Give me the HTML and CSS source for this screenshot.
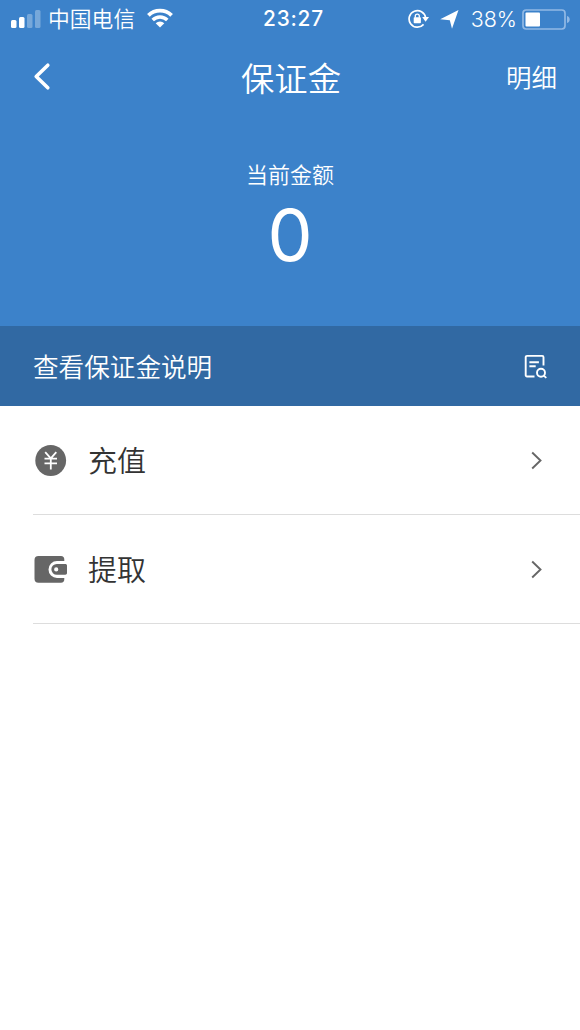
FILE: index.html
```html
<!DOCTYPE html>
<html lang="zh-CN">
<head>
<meta charset="utf-8">
<title>保证金</title>
<link rel="stylesheet" href="styles.css">
</head>
<body>
<header class="hero">
  <div class="status">
    <div class="status-left">
      <svg class="signal" width="31" height="18" viewBox="0 0 31 18" fill="#fff"><rect x="0" y="10" width="5.500" height="8" rx="1.5"/><rect x="8" y="7" width="5.500" height="11" rx="1.5"/><g opacity=".3"><rect x="16" y="4" width="5.500" height="14" rx="1.5"/><rect x="24" y="0" width="5.500" height="18" rx="1.5"/></g></svg>
      <span class="carrier">中国电信</span>
      <svg class="wifi" width="26" height="20" viewBox="0 0 26 20" fill="none" stroke="#fff"><path d="M1.4 7.3a16.5 16.5 0 0 1 23.2 0" stroke-width="3.8"/><path d="M5.7 12a10.3 10.3 0 0 1 14.6 0" stroke-width="3.5"/><path d="M8.7 15.2a6.2 6.2 0 0 1 8.6 0L13 19.5z" fill="#fff" stroke="none"/></svg>
    </div>
    <span class="time">23:27</span>
    <div class="status-right">
      <svg width="21" height="20" viewBox="0 0 21 20" fill="none" stroke="#fff" stroke-width="1.7"><path d="M15.6 15.4A8.3 8.3 0 1 1 17.6 8.700"/><path d="M14.2 8h6.800l-3.400 4.800z" fill="#fff" stroke="none"/><rect x="5.700" y="8.3" width="7.2" height="6" rx=".8" fill="#fff" stroke="none"/><path d="M7.3 8.8V7.1a2 2 0 0 1 4 0v1.7" stroke-width="1.3"/></svg>
      <svg class="location" width="19" height="19" viewBox="0 0 19 19" fill="#fff"><path d="M18.5 0 12 18.800 9.800 10.200.2 9.300z"/></svg>
      <span class="percent">38%</span>
      <svg class="battery" width="48" height="21" viewBox="0 0 48 21"><rect x="1" y="1" width="42" height="19" rx="3.2" fill="none" stroke="#91b9e5" stroke-width="1.7"/><rect x="3.5" y="3.5" width="14.5" height="14" rx="1" fill="#fff"/><path d="M45 7c3.6.8 3.6 6.2 0 7z" fill="#91b9e5"/></svg>
    </div>
  </div>
  <nav class="nav">
    <svg class="back" width="18" height="30" viewBox="0 0 18 30" fill="none" stroke="#fff" stroke-width="3.600" stroke-linecap="round" stroke-linejoin="round"><path d="M14.800 3.200 3.200 14.500l11.600 11.300"/></svg>
    <h1 class="title">保证金</h1>
    <a class="detail">明细</a>
  </nav>
  <div class="balance">
    <span class="label">当前金额</span>
    <strong class="amount">0</strong>
  </div>
</header>
<a class="notice">
  <span class="notice-text">查看保证金说明</span>
  <svg width="24" height="25" viewBox="0 0 24 25" fill="none" stroke="#fff" stroke-width="1.900"><path d="M10.500 22.500H3a1.300 1.300 0 0 1-1.300-1.300V3.200A1.300 1.300 0 0 1 3 1.900h15.200a1.300 1.300 0 0 1 1.300 1.300V11.500"/><path d="M5.400 8.300h9.500M5.400 12.300h6.300"/><circle cx="17" cy="18.700" r="4"/><path d="m19.700 21.600 2.600 2.300"/></svg>
</a>
<main class="list">
  <a class="row">
    <svg class="icon" width="34" height="34" viewBox="0 0 34 34"><circle cx="17.700" cy="17.500" r="15.400" fill="#666"/><path d="m12.200 9.200 5.600 6.200 5.500-6.200M11.500 15.600h12.500M11.500 20.400h12.500M17.800 15.400v11.200" fill="none" stroke="#fff" stroke-width="1.800"/></svg>
    <span class="row-text">充值</span>
    <svg class="chevron" width="14" height="20" viewBox="0 0 14 20" fill="none" stroke="#666" stroke-width="1.900"><path d="m2.200 2.500 8.300 8-8.300 8"/></svg>
  </a>
  <a class="row">
    <svg class="icon" width="34" height="34" viewBox="0 0 34 34" fill="#666"><path d="M5.500 4h22.500a3.500 3.500 0 0 1 3.300 3.500v1.500h-7.300a8.500 8.500 0 0 0 0 17h7.300v1.300a3.500 3.500 0 0 1-3.300 3.500H5.500a4 4 0 0 1-4-4V8a4 4 0 0 1 4-4z"/><path fill-rule="evenodd" d="M23.800 11.900h8.500c1 0 1.700.7 1.700 1.700v7.500c0 1-.7 1.700-1.700 1.700h-8.500a5.450 5.450 0 0 1 0-10.900zM23.200 15.300a2.100 2.100 0 1 0 0 4.200 2.100 2.100 0 0 0 0-4.200z"/></svg>
    <span class="row-text">提取</span>
    <svg class="chevron" width="14" height="20" viewBox="0 0 14 20" fill="none" stroke="#666" stroke-width="1.900"><path d="m2.200 2.500 8.300 8-8.300 8"/></svg>
  </a>
</main>
</body>
</html>
```
FILE: styles.css
```css
* { box-sizing: border-box; }
body {
  margin: 0;
  min-height: 1030px;
  background: #fff;
  color: #333;
  font-family: Inter, "Noto Sans CJK SC DemiLight", "Noto Sans CJK SC", sans-serif;
  font-weight: 350;
}
svg { display: block; flex: none; }
.hero {
  height: 326px;
  background: #3c82ca;
  color: #fff;
}
.status {
  display: grid;
  grid-template-columns: 1fr auto 1fr;
  align-items: center;
  height: 38px;
  padding: 0 10px 0 11px;
}
.status-left, .status-right { display: flex; align-items: center; }
.status-right { justify-content: flex-end; }
.carrier { margin-left: 6px; font-size: 21.800px; line-height: 38px; }
.wifi { margin: 0 0 2px 12px; }
.time {
  margin: 0 0 1px 6px;
  font-size: 20.800px;
  font-weight: 500;
  letter-spacing: .8px;
}
.location { margin-left: 11px; }
.percent { margin: 0 0 1px 12px; font-size: 21.500px; }
.battery { margin-left: 5px; }
.nav {
  display: grid;
  grid-template-columns: 1fr auto 1fr;
  align-items: center;
  height: 78px;
  padding: 0 23px 0 33px;
}
.title { margin: 3px 8px 0 0; font-size: 33.300px; font-weight: 350; line-height: 48px; }
.detail { justify-self: end; margin-bottom: 4px; font-size: 25.500px; }
.balance {
  display: flex;
  flex-direction: column;
  align-items: center;
  padding-top: 43px;
}
.label { font-size: 22px; line-height: 32px; }
.amount {
  font-size: 71.500px;
  font-weight: 400;
  line-height: 89px;
}
.notice {
  display: flex;
  align-items: center;
  justify-content: space-between;
  height: 80px;
  padding: 0 32px 0 33px;
  background: #3169a3;
  color: #fff;
  font-size: 25.600px;
}
.notice-text, .row-text { padding-bottom: 2px; }
.list { padding-left: 33px; }
.row {
  display: flex;
  align-items: center;
  height: 109px;
  padding-right: 36px;
  border-bottom: 1px solid #ddd;
  font-size: 29px;
}
.icon { margin-right: 21px; }
.chevron { margin-left: auto; }
```
